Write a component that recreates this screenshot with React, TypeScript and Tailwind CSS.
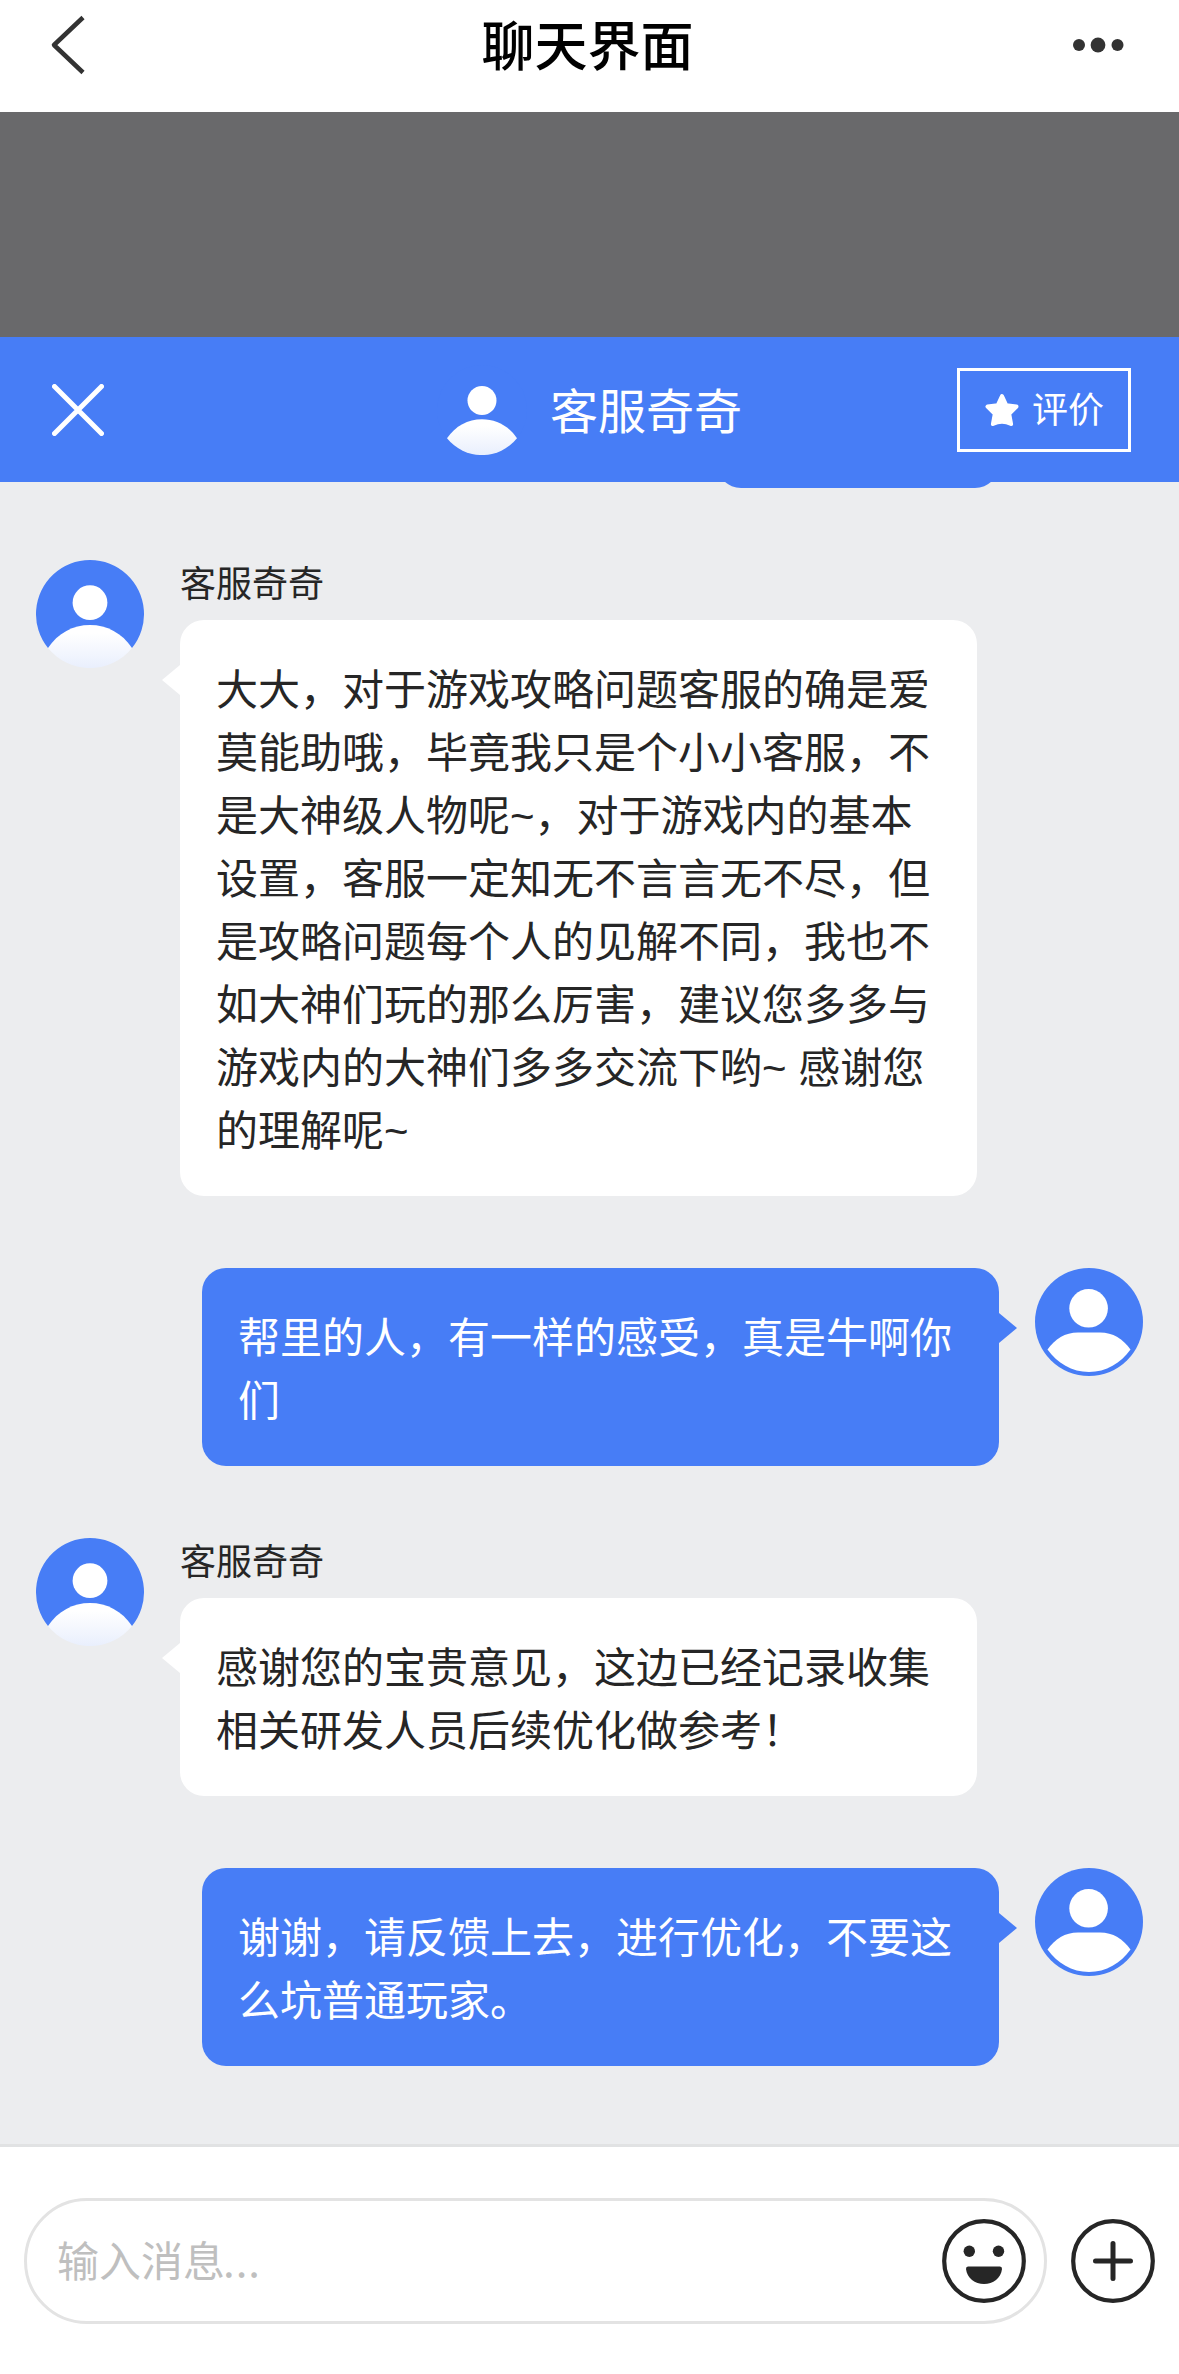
import type { ReactNode } from "react";

type Message = {
  from: "agent" | "user";
  text: string;
};

const AGENT_NAME = "客服奇奇";

const messages: Message[] = [
  {
    from: "agent",
    text: "大大，对于游戏攻略问题客服的确是爱莫能助哦，毕竟我只是个小小客服，不是大神级人物呢~，对于游戏内的基本设置，客服一定知无不言言无不尽，但是攻略问题每个人的见解不同，我也不如大神们玩的那么厉害，建议您多多与游戏内的大神们多多交流下哟~ 感谢您的理解呢~",
  },
  { from: "user", text: "帮里的人，有一样的感受，真是牛啊你们" },
  { from: "agent", text: "感谢您的宝贵意见，这边已经记录收集相关研发人员后续优化做参考！" },
  { from: "user", text: "谢谢，请反馈上去，进行优化，不要这么坑普通玩家。" },
];

function AgentAvatar({ className }: { className: string }) {
  return (
    <svg className={className} viewBox="0 0 108 108">
      <defs>
        <linearGradient id="shoulder" x1="0" y1="64" x2="0" y2="108" gradientUnits="userSpaceOnUse">
          <stop offset="0.2" stopColor="#ffffff" />
          <stop offset="1" stopColor="#e9effd" />
        </linearGradient>
      </defs>
      <path d="M12 88A54 54 0 1 1 96 88L54 90z" fill="#477df6" />
      <circle cx="54" cy="42.7" r="17.4" fill="#ffffff" />
      <path d="M12 88C22 73 37 65 54 65s32 8 42 23a54 54 0 0 1-84 0z" fill="url(#shoulder)" />
    </svg>
  );
}

function UserAvatar() {
  return (
    <svg className="size-[108px] shrink-0" viewBox="0 0 108 108">
      <circle cx="54" cy="54" r="54" fill="#477df6" />
      <circle cx="53.6" cy="40.3" r="19.3" fill="#ffffff" />
      <path d="M12.5 81.5C20 71 30 64.5 43 64.5h22c13 0 23 6.5 30.5 17C86 95 71 104 54 104s-32-9-41.5-22.5z" fill="#ffffff" />
    </svg>
  );
}

function MessageText({ children }: { children: ReactNode }) {
  return (
    <p className="font-['Liberation_Sans','Noto_Sans_CJK_SC',sans-serif] text-[42px] leading-[63px]">
      {children}
    </p>
  );
}

function AgentMessage({ children }: { children: ReactNode }) {
  return (
    <div className="flex items-start gap-9 pl-9">
      <AgentAvatar className="size-[108px] shrink-0" />
      <div>
        <p className="h-[60px] text-[36px] leading-[42px]">{AGENT_NAME}</p>
        <div className="relative w-[797px] rounded-3xl bg-white px-9 pt-[39px] pb-[33px]">
          <svg className="absolute top-[45px] -left-[18px] h-[30px] w-[18px]" viewBox="0 0 18 30">
            <path d="M18 0 0 15l18 15z" fill="#ffffff" />
          </svg>
          <MessageText>{children}</MessageText>
        </div>
      </div>
    </div>
  );
}

function UserMessage({ children }: { children: ReactNode }) {
  return (
    <div className="flex items-start justify-end gap-9 pr-9">
      <div className="relative w-[797px] rounded-3xl bg-[#477df6] px-9 pt-[39px] pb-[33px] text-white">
        <svg className="absolute top-[45px] -right-[18px] h-[30px] w-[18px]" viewBox="0 0 18 30">
          <path d="M0 0l18 15L0 30z" fill="#477df6" />
        </svg>
        <MessageText>{children}</MessageText>
      </div>
      <UserAvatar />
    </div>
  );
}

export default function App() {
  return (
    <main className="flex h-[2374px] w-[1179px] flex-col overflow-hidden bg-white font-['Noto_Sans_CJK_SC',sans-serif] text-[#262626]">
      <nav className="flex h-28 shrink-0 items-start justify-between pr-[52px] pl-12">
        <svg className="h-[90px] w-[74px]" viewBox="0 0 74 90" fill="none" stroke="#333333" strokeWidth="4.5" strokeLinejoin="round">
          <path d="M35 17.5 6 45l29 27.5" />
        </svg>
        <h1 className="text-[53px] leading-[86px] font-medium text-black">聊天界面</h1>
        <svg className="h-[90px] w-[74px]" viewBox="0 0 74 90" fill="#333333">
          <circle cx="26" cy="45" r="6" />
          <circle cx="45" cy="45" r="7.4" />
          <circle cx="64.5" cy="45" r="6" />
        </svg>
      </nav>

      <div className="h-[225px] shrink-0 bg-[#69696b]" />

      <header className="flex h-[145px] shrink-0 items-center justify-between bg-[#477df6] pr-12 pl-[52px] text-white">
        <div className="w-[170px]">
          <svg className="size-[52px]" viewBox="0 0 52 52" fill="none" stroke="#ffffff" strokeWidth="5" strokeLinecap="round">
            <path d="M2.5 2.5l47 47M49.5 2.5l-47 47" />
          </svg>
        </div>
        <div className="flex items-center gap-[23px]">
          <AgentAvatar className="size-[90px]" />
          <span className="pb-1 text-[48px] leading-[72px]">{AGENT_NAME}</span>
        </div>
        <button className="flex h-[84px] w-[174px] items-center gap-3 border-[3px] border-white pl-[24px]">
          <svg className="size-9" viewBox="0 0 36 36" fill="#ffffff" stroke="#ffffff" strokeWidth="4" strokeLinejoin="round">
            <path d="M18 4l4.2 9.2 10.3 1.4-7.3 7.2 1.9 10.2q-9.1-4.5-18.2 0l1.9-10.2-7.3-7.2 10.3-1.4z" />
          </svg>
          <span className="pb-[5px] text-[36px] leading-[54px]">评价</span>
        </button>
      </header>

      <section className="flex h-[1662px] shrink-0 flex-col gap-[72px] overflow-hidden bg-[#ecedef]">
        {/* tail of the previous message, scrolled under the header */}
        <div className="-mt-[93px] mr-[180px] h-[99px] w-[282px] shrink-0 self-end rounded-3xl bg-[#477df6]" />
        {messages.map((message, i) =>
          message.from === "agent" ? (
            <AgentMessage key={i}>{message.text}</AgentMessage>
          ) : (
            <UserMessage key={i}>{message.text}</UserMessage>
          ),
        )}
      </section>

      <footer className="flex flex-1 items-start gap-6 border-t-[3px] border-[#e1e2e3] bg-white pt-[51px] pl-6">
        <div className="flex h-[126px] w-[1023px] items-center justify-between rounded-full border-[3px] border-[#e3e3e3] pr-[18px] pl-[30px]">
          <span className="pb-[5px] text-[42px] leading-[63px] text-[#bfbfbf]">
            输入消息<span className="-ml-[2px] tracking-[1px]">...</span>
          </span>
          <svg className="size-[84px]" viewBox="0 0 84 84" fill="#262626">
            <circle cx="42" cy="42" r="39.8" fill="none" stroke="#262626" strokeWidth="4.2" />
            <circle cx="27.3" cy="32.3" r="5.7" />
            <circle cx="56.5" cy="32.3" r="5.7" />
            <path d="M26 47.5h32q2.2 0 2 2.5c-1 9-9 15-18 15s-17-6-18-15q-.2-2.5 2-2.5z" />
          </svg>
        </div>
        <svg className="mt-[21px] size-[84px]" viewBox="0 0 84 84" fill="none" stroke="#262626">
          <circle cx="42" cy="42" r="39.8" strokeWidth="4.2" />
          <path d="M24.5 42h35M42 24.5v35" strokeWidth="5" strokeLinecap="round" />
        </svg>
      </footer>
    </main>
  );
}
